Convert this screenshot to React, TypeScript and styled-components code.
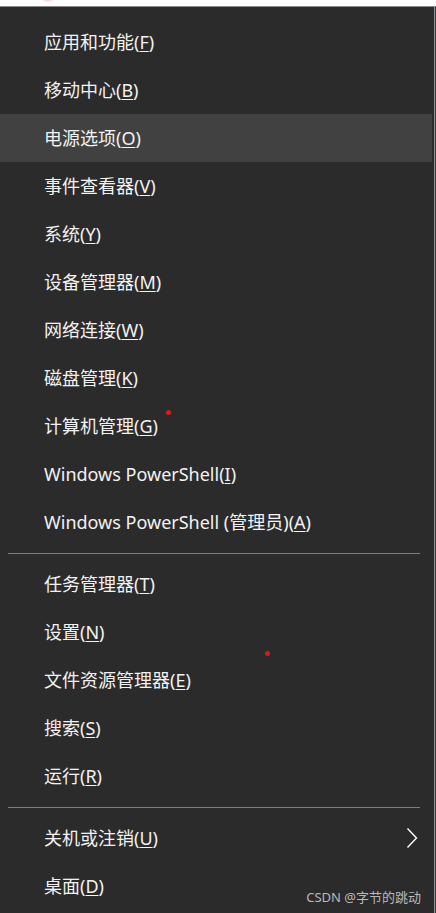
import React from 'react';
import styled, { createGlobalStyle } from 'styled-components';

const GlobalStyle = createGlobalStyle`
    html, body {
        margin: 0;
        padding: 0;
        background: #2b2b2b;
    }
    body {
        width: 436px;
        height: 913px;
        overflow: hidden;
    }
`;

const Page = styled.div`
    position: relative;
    width: 436px;
    height: 913px;
    display: flex;
    flex-direction: column;
    background: #2b2b2b;
    overflow: hidden;
`;

const TopBand = styled.div`
    position: relative;
    height: 6px;
    background: #ffffff;
    border-bottom: 1px solid #8a8a8a;
    flex-shrink: 0;
`;

const TopBlob = styled.div`
    position: absolute;
    left: 42px;
    top: -5px;
    width: 12px;
    height: 7px;
    border-radius: 50%;
    background: #f7e2dc;
`;

const Body = styled.div`
    flex: 1;
    display: flex;
`;

const Menu = styled.div`
    width: 432px;
    padding: 11px 0 0;
    display: flex;
    flex-direction: column;
    font-family: "Noto Sans", "Noto Sans CJK SC", sans-serif;
    font-size: 18px;
    color: #f2f2f2;
`;

const Gutter = styled.div`
    width: 2px;
`;

const EdgeStrip = styled.div`
    width: 2px;
    border-left: 1px solid #8f8f8f;
    background: #33383d;
    box-sizing: border-box;
`;

const Row = styled.div<{ $active?: boolean }>`
    height: 48px;
    display: flex;
    align-items: center;
    justify-content: space-between;
    padding: 0 14px 0 44px;
    background: ${p => (p.$active ? '#414141' : 'transparent')};
    white-space: nowrap;
    line-height: 1;
`;

const Key = styled.span`
    text-decoration: underline;
    text-underline-offset: 2px;
    text-decoration-thickness: 1px;
`;

const Separator = styled.div`
    height: 14px;
    display: flex;
    align-items: center;
    padding: 0 12px 0 8px;
    &::after {
        content: '';
        flex: 1;
        height: 1px;
        background: #7d7d7d;
    }
`;

const Dot = styled.span`
    position: absolute;
    width: 5px;
    height: 5px;
    border-radius: 50%;
    background: #e3161c;
`;

const Watermark = styled.div`
    position: absolute;
    right: 15px;
    bottom: 7px;
    font-family: "Noto Sans", "Noto Sans CJK SC", sans-serif;
    font-size: 13px;
    color: #b9b9b9;
`;

type Item = { label: string; key: string; active?: boolean; arrow?: boolean };

const group1: Item[] = [
    { label: '应用和功能', key: 'F' },
    { label: '移动中心', key: 'B' },
    { label: '电源选项', key: 'O', active: true },
    { label: '事件查看器', key: 'V' },
    { label: '系统', key: 'Y' },
    { label: '设备管理器', key: 'M' },
    { label: '网络连接', key: 'W' },
    { label: '磁盘管理', key: 'K' },
    { label: '计算机管理', key: 'G' },
    { label: 'Windows PowerShell', key: 'I' },
    { label: 'Windows PowerShell (管理员)', key: 'A' },
];

const group2: Item[] = [
    { label: '任务管理器', key: 'T' },
    { label: '设置', key: 'N' },
    { label: '文件资源管理器', key: 'E' },
    { label: '搜索', key: 'S' },
    { label: '运行', key: 'R' },
];

const group3: Item[] = [
    { label: '关机或注销', key: 'U', arrow: true },
    { label: '桌面', key: 'D' },
];

const Chevron = () => (
    <svg width="12" height="22" viewBox="0 0 12 22">
        <path d="M1.5 1.5 L10.5 11 L1.5 20.5" fill="none" stroke="#ffffff" strokeWidth="1.4" />
    </svg>
);

const MenuRow = ({ item }: { item: Item }) => (
    <Row $active={item.active}>
        <span>
            {item.label}(<Key>{item.key}</Key>)
        </span>
        {item.arrow && <Chevron />}
    </Row>
);

export default function App() {
    return (
        <Page>
            <GlobalStyle />
            <TopBand>
                <TopBlob />
            </TopBand>
            <Body>
                <Menu>
                    {group1.map(i => <MenuRow key={i.key} item={i} />)}
                    <Separator />
                    {group2.map(i => <MenuRow key={i.key} item={i} />)}
                    <Separator />
                    {group3.map(i => <MenuRow key={i.key} item={i} />)}
                </Menu>
                <Gutter />
                <EdgeStrip />
            </Body>
            <Dot style={{ left: 166, top: 410 }} />
            <Dot style={{ left: 265, top: 651 }} />
            <Watermark>CSDN @字节的跳动</Watermark>
        </Page>
    );
}
